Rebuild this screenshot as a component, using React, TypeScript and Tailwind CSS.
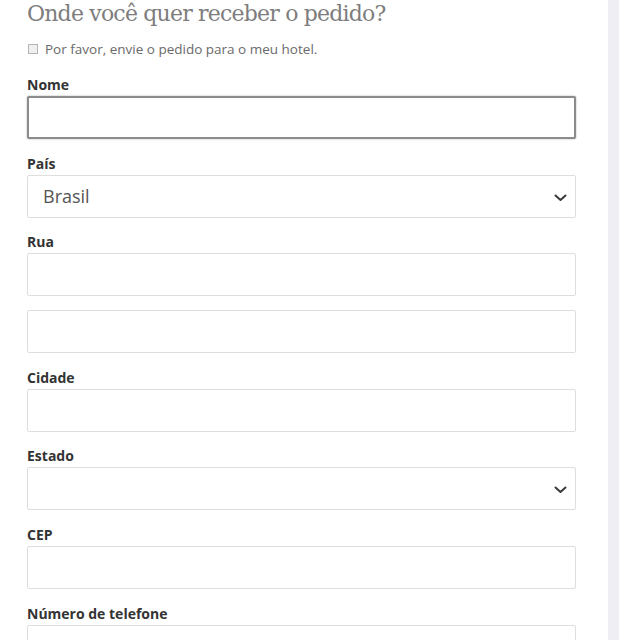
import React from 'react';

const labelCls =
  "block h-[20px] text-[14px] leading-[20px] font-bold text-[#333] font-['Open_Sans',sans-serif]";
const inputCls =
  "block w-[549px] h-[43px] border border-[#dedede] rounded-[2px] bg-white";

function Chevron() {
  return (
    <svg width="13" height="8" viewBox="0 0 13 8" className="absolute right-[8px] top-[18px]">
      <path d="M1.5 1.5 L6.5 6 L11.5 1.5" fill="none" stroke="#3a3a3a" strokeWidth="2" strokeLinecap="round" strokeLinejoin="round" />
    </svg>
  );
}

function Field({ label, children }: { label: string; children: React.ReactNode }) {
  return (
    <div className="mb-[14.6px]">
      <label className={labelCls}>{label}</label>
      <div className="mt-[1px]">{children}</div>
    </div>
  );
}

export default function App() {
  return (
    <div className="flex h-[640px] w-[619px] overflow-hidden bg-white">
      <main className="w-[608px] pl-[27px]">
        <h2 className="h-[28px] text-[22px] leading-[28px] text-[#7d7d7d] font-['DejaVu_Serif',serif] font-light tracking-[-0.8px]">
          Onde você quer receber o pedido?
        </h2>

        <div className="mt-[12px] mb-[17px] flex h-[18px] items-center gap-[7px] text-[13.5px] leading-[18px] text-[#6a6a6a] font-['Open_Sans',sans-serif]">
          <span className="ml-[1px] block h-[10px] w-[10px] border border-[#b5b5b5] bg-[#f0f0f0]" />
          <span>Por favor, envie o pedido para o meu hotel.</span>
        </div>

        <Field label="Nome">
          <div className="w-[549px] h-[43px] border-2 border-[#8c8c8c] rounded-[2px] bg-white shadow-[0_0_2px_rgba(0,0,0,0.35)]" />
        </Field>

        <Field label="País">
          <div className={`${inputCls} relative flex items-center pl-[15px]`}>
            <span className="text-[18px] text-[#555] font-['Open_Sans',sans-serif]">Brasil</span>
            <Chevron />
          </div>
        </Field>

        <Field label="Rua">
          <div className={inputCls} />
          <div className={`${inputCls} mt-[14px]`} />
        </Field>

        <Field label="Cidade">
          <div className={inputCls} />
        </Field>

        <Field label="Estado">
          <div className={`${inputCls} relative`}>
            <Chevron />
          </div>
        </Field>

        <Field label="CEP">
          <div className={inputCls} />
        </Field>

        <Field label="Número de telefone">
          <div className={inputCls} />
        </Field>
      </main>
      <aside className="w-[11px] bg-[#eeeef4]" />
    </div>
  );
}
